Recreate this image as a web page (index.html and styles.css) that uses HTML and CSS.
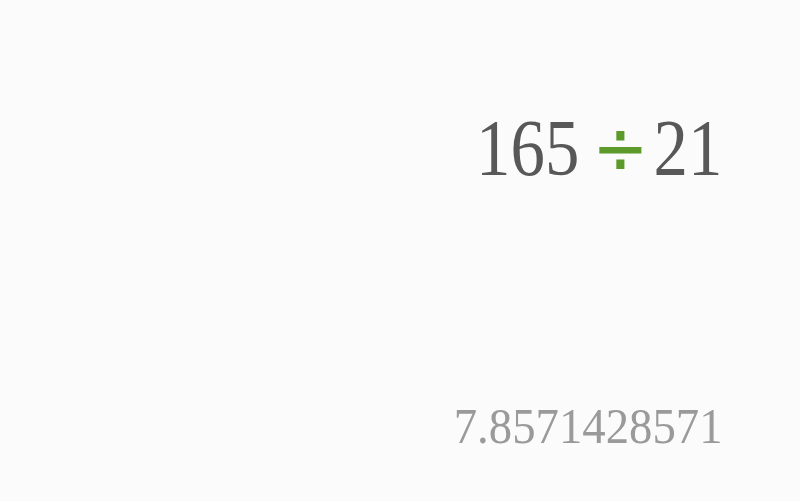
FILE: index.html
```html
<!DOCTYPE html>
<html>
<head>
<meta charset="utf-8">
<link rel="stylesheet" href="styles.css">
</head>
<body>
<main class="calc">
  <div class="expr">
    <span class="num">165</span><span class="op">÷</span><span class="num">21</span>
  </div>
  <div class="result">7.8571428571</div>
</main>
</body>
</html>
```
FILE: styles.css
```css
html, body {
  margin: 0;
  padding: 0;
  background: #fbfbfb;
}
.calc {
  height: 501px;
  box-sizing: border-box;
  padding: 100px 78px 0 0;
  display: flex;
  flex-direction: column;
  align-items: flex-end;
  font-family: "Liberation Serif", serif;
}
.expr {
  display: flex;
  align-items: baseline;
  color: #585858;
  font-size: 80px;
  line-height: 96px;
  transform: scaleX(0.86);
  transform-origin: right center;
}
.op {
  font-family: "DejaVu Sans", sans-serif;
  font-size: 78px;
  color: #5c9a2c;
  margin: 0 6px 0 15px;
}
.result {
  margin-top: 200px;
  color: #9a9a9a;
  font-size: 50px;
  line-height: 60px;
  transform: scaleX(0.935);
  transform-origin: right center;
}
```
